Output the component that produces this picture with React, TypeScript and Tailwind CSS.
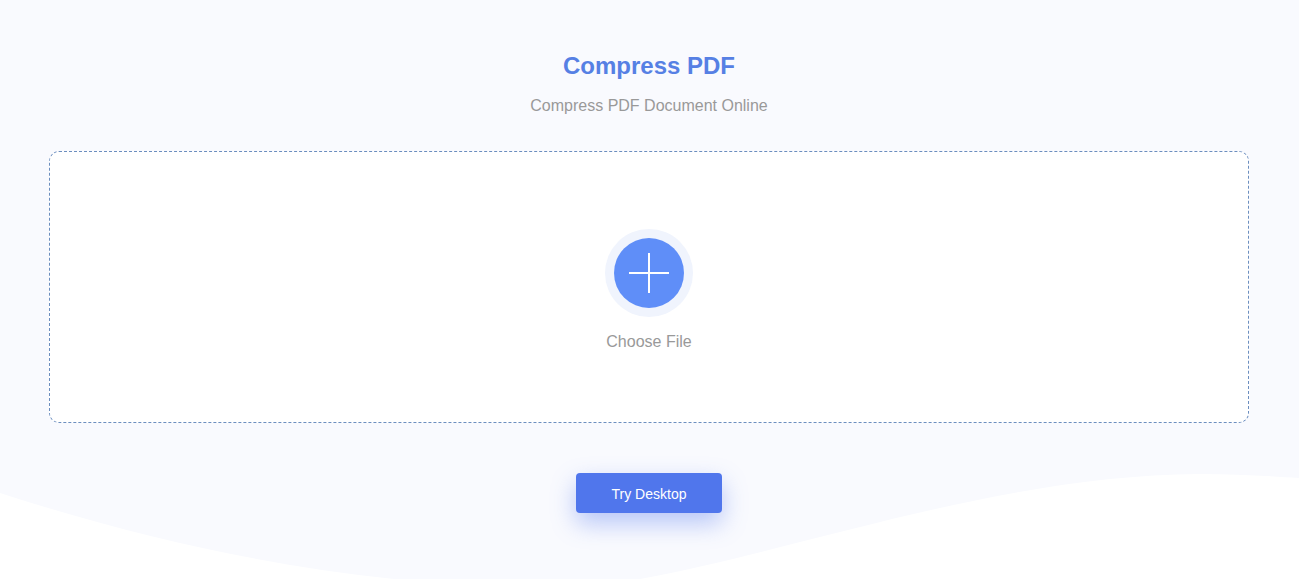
import React from "react";

const Wave: React.FC = () => (
  <svg
    className="absolute bottom-0 left-0 w-[1299px] h-[105px]"
    viewBox="0 474 1299 105"
    fill="#ffffff"
    aria-hidden="true"
  >
    <path d="M0 493C130 535 260 565 394 579L0 579Z" />
    <path d="M640 579C800 550 1000 475 1200 474C1235 474 1270 476 1299 478L1299 579Z" />
  </svg>
);

const App: React.FC = () => {
  return (
    <div className="relative h-[579px] overflow-hidden bg-[#f9fafe] font-['Liberation_Sans',Arial,sans-serif]">
      <Wave />

      <div className="relative flex w-[1298px] flex-col items-center pt-[51px]">
        <h1 className="text-2xl leading-[30px] font-bold text-[#5680e4]">Compress PDF</h1>
        <p className="mt-[15px] text-base leading-5 text-[#999999]">Compress PDF Document Online</p>

        {/* Upload area */}
        <div className="mt-[35px] flex h-[272px] w-[1200px] flex-col items-center rounded-[10px] border border-dashed border-[#6c8ebf] bg-white pt-[77px]">
          <div className="flex h-[88px] w-[88px] items-center justify-center rounded-full bg-[#f0f4fd]">
            <div className="flex h-[70px] w-[70px] items-center justify-center rounded-full bg-[#5f8ef8]">
              <svg width="40" height="40" viewBox="0 0 40 40" aria-hidden="true">
                <path d="M20 0V40M0 20H40" stroke="#ffffff" strokeWidth="2" />
              </svg>
            </div>
          </div>
          <span className="mt-[15px] text-base leading-5 text-[#999999]">Choose File</span>
        </div>

        <button className="mt-[50px] h-10 w-[146px] rounded bg-[#5076ec] pt-px text-sm text-white shadow-[0_10px_24px_rgba(80,118,238,0.4)]">
          Try Desktop
        </button>
      </div>
    </div>
  );
};

export default App;
